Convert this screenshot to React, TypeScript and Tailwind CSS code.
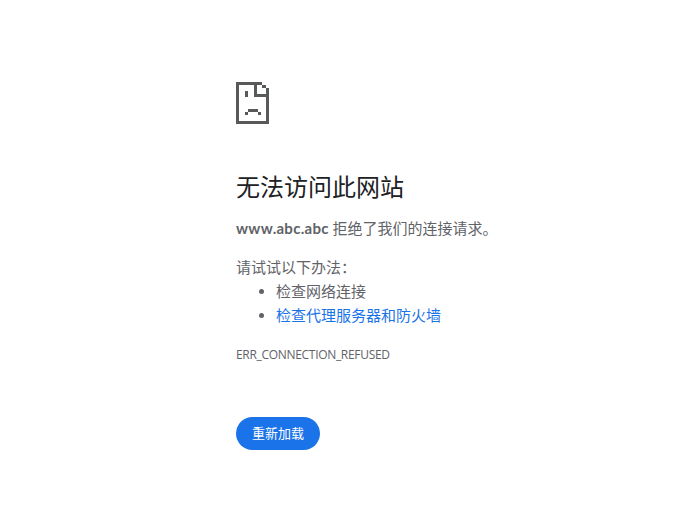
const font = 'font-["Lato","Noto_Sans_CJK_SC",sans-serif]';

function SadPage() {
  return (
    <svg width="33" height="42" viewBox="0 0 33 42" fill="#58595b" shapeRendering="crispEdges">
      <path
        d="M0 0H26V3H30V6H33V42H0ZM3 3V39H30V15H18V3ZM21 3V12H30V6H26V3Z"
        fillRule="evenodd"
      />
      <rect x="9" y="9" width="3" height="6" />
      <rect x="9" y="30" width="3" height="3" />
      <rect x="12" y="27" width="10" height="3" />
      <rect x="22" y="30" width="3" height="3" />
    </svg>
  );
}

export default function App() {
  return (
    <div className={`${font} h-[527px] w-[696px] bg-white pt-[82px] pl-[236px] text-[15px] text-[#5f6368]`}>
      <SadPage />
      <h1 className="mt-[48px] text-[24px] leading-[30px] font-normal text-[#202124]">无法访问此网站</h1>
      <p className="mt-[14px] leading-[24px]">
        <strong className="font-bold tracking-[0.28px]">www.abc.abc</strong> 拒绝了我们的连接请求。
      </p>
      <p className="mt-[15px] leading-[24px]">请试试以下办法：</p>
      <ul className="list-disc pl-[40px] leading-[24px]">
        <li>检查网络连接</li>
        <li>
          <span className="text-[#1a73e8]">检查代理服务器和防火墙</span>
        </li>
      </ul>
      <div className='mt-[21px] font-["Open_Sans",sans-serif] text-[12px] leading-[14px] tracking-[-0.31px]'>
        ERR_CONNECTION_REFUSED
      </div>
      <button className="mt-[55px] flex h-[33px] w-[84px] items-center justify-center rounded-full bg-[#1a73e8] text-[13px] text-white">
        重新加载
      </button>
    </div>
  );
}
